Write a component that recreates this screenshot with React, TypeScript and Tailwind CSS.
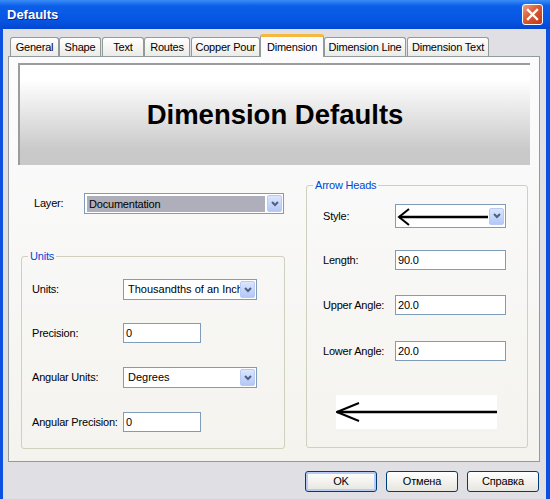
import React from 'react';

const tabs = [
  { label: 'General', cls: 'w-[49px]' },
  { label: 'Shape', cls: 'w-[42px]' },
  { label: 'Text', cls: 'w-[42px] ml-px' },
  { label: 'Routes', cls: 'w-[46px]' },
  { label: 'Copper Pour', cls: 'w-[69px] ml-px' },
  { label: 'Dimension', cls: 'w-[64px]', active: true },
  { label: 'Dimension Line', cls: 'w-[82px]' },
  { label: 'Dimension Text', cls: 'w-[82px] ml-px' },
];

function DropButton() {
  return (
    <div className="w-[15px] h-[17px] mr-px shrink-0 rounded-[2px] border border-[#B9CBF5] bg-gradient-to-b from-[#DCE6FD] to-[#B3C8F7] flex items-center justify-center">
      <svg width="8" height="6" viewBox="0 0 8 6">
        <path d="M1 1 L4 4 L7 1" stroke="#4D6185" strokeWidth="2" fill="none" />
      </svg>
    </div>
  );
}

function Select({ value, className = '' }: { value: string; className?: string }) {
  return (
    <div className={`h-[21px] border border-[#7F9DB9] bg-white flex items-center ${className}`}>
      <span className="flex-1 min-w-0 overflow-hidden whitespace-nowrap pl-[4px] tracking-normal">{value}</span>
      <DropButton />
    </div>
  );
}

function Input({ value, className = '' }: { value: string; className?: string }) {
  return (
    <div className={`h-[20px] border border-[#7F9DB9] bg-white flex items-center pl-[2px] ${className}`}>
      {value}
    </div>
  );
}

function Button({ label, isDefault = false }: { label: string; isDefault?: boolean }) {
  return (
    <button
      className={`w-[72px] h-[21px] rounded-[3px] border border-[#003C74] bg-gradient-to-b from-white to-[#E6E5DE] text-black text-[11px] ${
        isDefault ? 'shadow-[inset_0_0_0_2px_#B9CBF3]' : ''
      }`}
    >
      {label}
    </button>
  );
}

export default function App() {
  return (
    <div className="w-[550px] h-[499px] overflow-hidden flex flex-col font-['Liberation_Sans',Arial,sans-serif] text-[11px] tracking-[-0.2px] text-black">
      {/* title bar */}
      <div className="h-[29px] shrink-0 flex items-center justify-between pl-[7px] pr-[7px] bg-[linear-gradient(to_bottom,#3B8CF6_0%,#0C5FE8_20%,#0655E3_70%,#0347D2_100%)]">
        <span className="text-white font-bold text-[13px] tracking-normal [text-shadow:1px_1px_0_#0A2A8A]">Defaults</span>
        <div className="w-[21px] h-[21px] rounded-[3px] border border-white bg-[linear-gradient(135deg,#F0A186_0%,#DA5A33_45%,#C03818_100%)] flex items-center justify-center">
          <svg width="13" height="13" viewBox="0 0 13 13">
            <path d="M2 2 L11 11 M11 2 L2 11" stroke="white" strokeWidth="2.4" strokeLinecap="square" />
          </svg>
        </div>
      </div>

      {/* window body */}
      <div className="flex-1 flex flex-col bg-[#E0DFE3] border-l-[3px] border-r-[4px] border-[#0B50E0] pl-[5px] pt-[5px]">
        {/* tab strip */}
        <div className="h-[22px] flex items-end pl-[2px]">
          {tabs.map((t) =>
            t.active ? (
              <div
                key={t.label}
                className={`${t.cls} h-[23px] -mb-px relative z-10 rounded-t-[3px] border-x border-x-[#919B9C] border-t-[3px] border-t-[#F7B83E] bg-[#FCFCFE] flex items-center justify-center`}
              >
                {t.label}
              </div>
            ) : (
              <div
                key={t.label}
                className={`${t.cls} h-[19px] rounded-t-[3px] border border-b-0 border-[#919B9C] bg-gradient-to-b from-white to-[#ECEBE6] flex items-center justify-center`}
              >
                {t.label}
              </div>
            )
          )}
        </div>

        {/* tab page */}
        <div className="w-[532px] h-[406px] border border-[#919B9C] bg-gradient-to-b from-[#FCFCFE] to-[#F4F3EE] pl-[9px] pt-[6px]">
          <div className="w-[512px] h-[102px] border-t-2 border-l-2 border-[#9C9C9C] bg-[linear-gradient(to_bottom,#ffffff_15%,#c9c9c9_85%)] flex items-center justify-center">
            <span className="font-bold text-[27.5px] tracking-normal">Dimension Defaults</span>
          </div>

          <div className="flex items-start">
            {/* left column */}
            <div className="w-[264px] ml-[3px] flex flex-col">
              <div className="mt-[28px] flex items-center">
                <span className="w-[63px] pl-[13px]">Layer:</span>
                <div className="w-[200px] h-[21px] border border-[#7F9DB9] bg-white flex items-center">
                  <span className="flex-1 h-[16px] mx-[2px] bg-[#AFAFBB] pl-[2px] leading-[16px]">Documentation</span>
                  <DropButton />
                </div>
              </div>

              <fieldset className="mt-[36px] border border-[#D0D0BF] rounded-[3px] pl-[10px] pt-[16px] pb-[16px]">
                <legend className="-ml-[4px] px-[2px] leading-[13px] text-[#0046D5]">Units</legend>
                <div className="flex items-center">
                  <span className="w-[91px]">Units:</span>
                  <Select value="Thousandths of an Inch" className="w-[134px]" />
                </div>
                <div className="mt-[23px] flex items-center">
                  <span className="w-[91px]">Precision:</span>
                  <Input value="0" className="w-[78px]" />
                </div>
                <div className="mt-[24px] flex items-center">
                  <span className="w-[91px]">Angular Units:</span>
                  <Select value="Degrees" className="w-[134px]" />
                </div>
                <div className="mt-[24px] flex items-center">
                  <span className="w-[91px]">Angular Precision:</span>
                  <Input value="0" className="w-[78px]" />
                </div>
              </fieldset>
            </div>

            {/* right column */}
            <div className="w-[222px] ml-[21px] flex flex-col">
              <fieldset className="mt-[14px] border border-[#D0D0BF] rounded-[3px] pl-[16px] pt-[12px] pb-[18px]">
                <legend className="-ml-[10px] px-[2px] leading-[13px] text-[#0046D5]">Arrow Heads</legend>
                <div className="flex items-center">
                  <span className="w-[72px]">Style:</span>
                  <div className="w-[111px] h-[24px] border border-[#7F9DB9] bg-white flex items-center">
                    <svg width="92" height="20" viewBox="0 0 92 20" className="ml-[1px] flex-1">
                      <path d="M2 11 L91 11" stroke="black" strokeWidth="2.5" />
                      <path d="M12 3 L2 11 L12 19" stroke="black" strokeWidth="2" fill="none" />
                    </svg>
                    <DropButton />
                  </div>
                </div>
                <div className="mt-[22px] flex items-center">
                  <span className="w-[72px]">Length:</span>
                  <Input value="90.0" className="w-[111px]" />
                </div>
                <div className="mt-[25px] flex items-center">
                  <span className="w-[72px]">Upper Angle:</span>
                  <Input value="20.0" className="w-[111px]" />
                </div>
                <div className="mt-[26px] flex items-center">
                  <span className="w-[72px]">Lower Angle:</span>
                  <Input value="20.0" className="w-[111px]" />
                </div>
                <div className="mt-[34px] ml-[13px] w-[161px] h-[34px] bg-white">
                  <svg width="161" height="34" viewBox="0 0 161 34">
                    <path d="M1 17 L161 17" stroke="black" strokeWidth="2.5" />
                    <path d="M23 8 L1 17 L23 26" stroke="black" strokeWidth="2" fill="none" />
                  </svg>
                </div>
              </fieldset>
            </div>
          </div>
        </div>

        {/* dialog buttons */}
        <div className="mt-[9px] flex justify-end gap-[9px] pr-[7px]">
          <Button label="OK" isDefault />
          <Button label="Отмена" />
          <Button label="Справка" />
        </div>
      </div>
    </div>
  );
}
